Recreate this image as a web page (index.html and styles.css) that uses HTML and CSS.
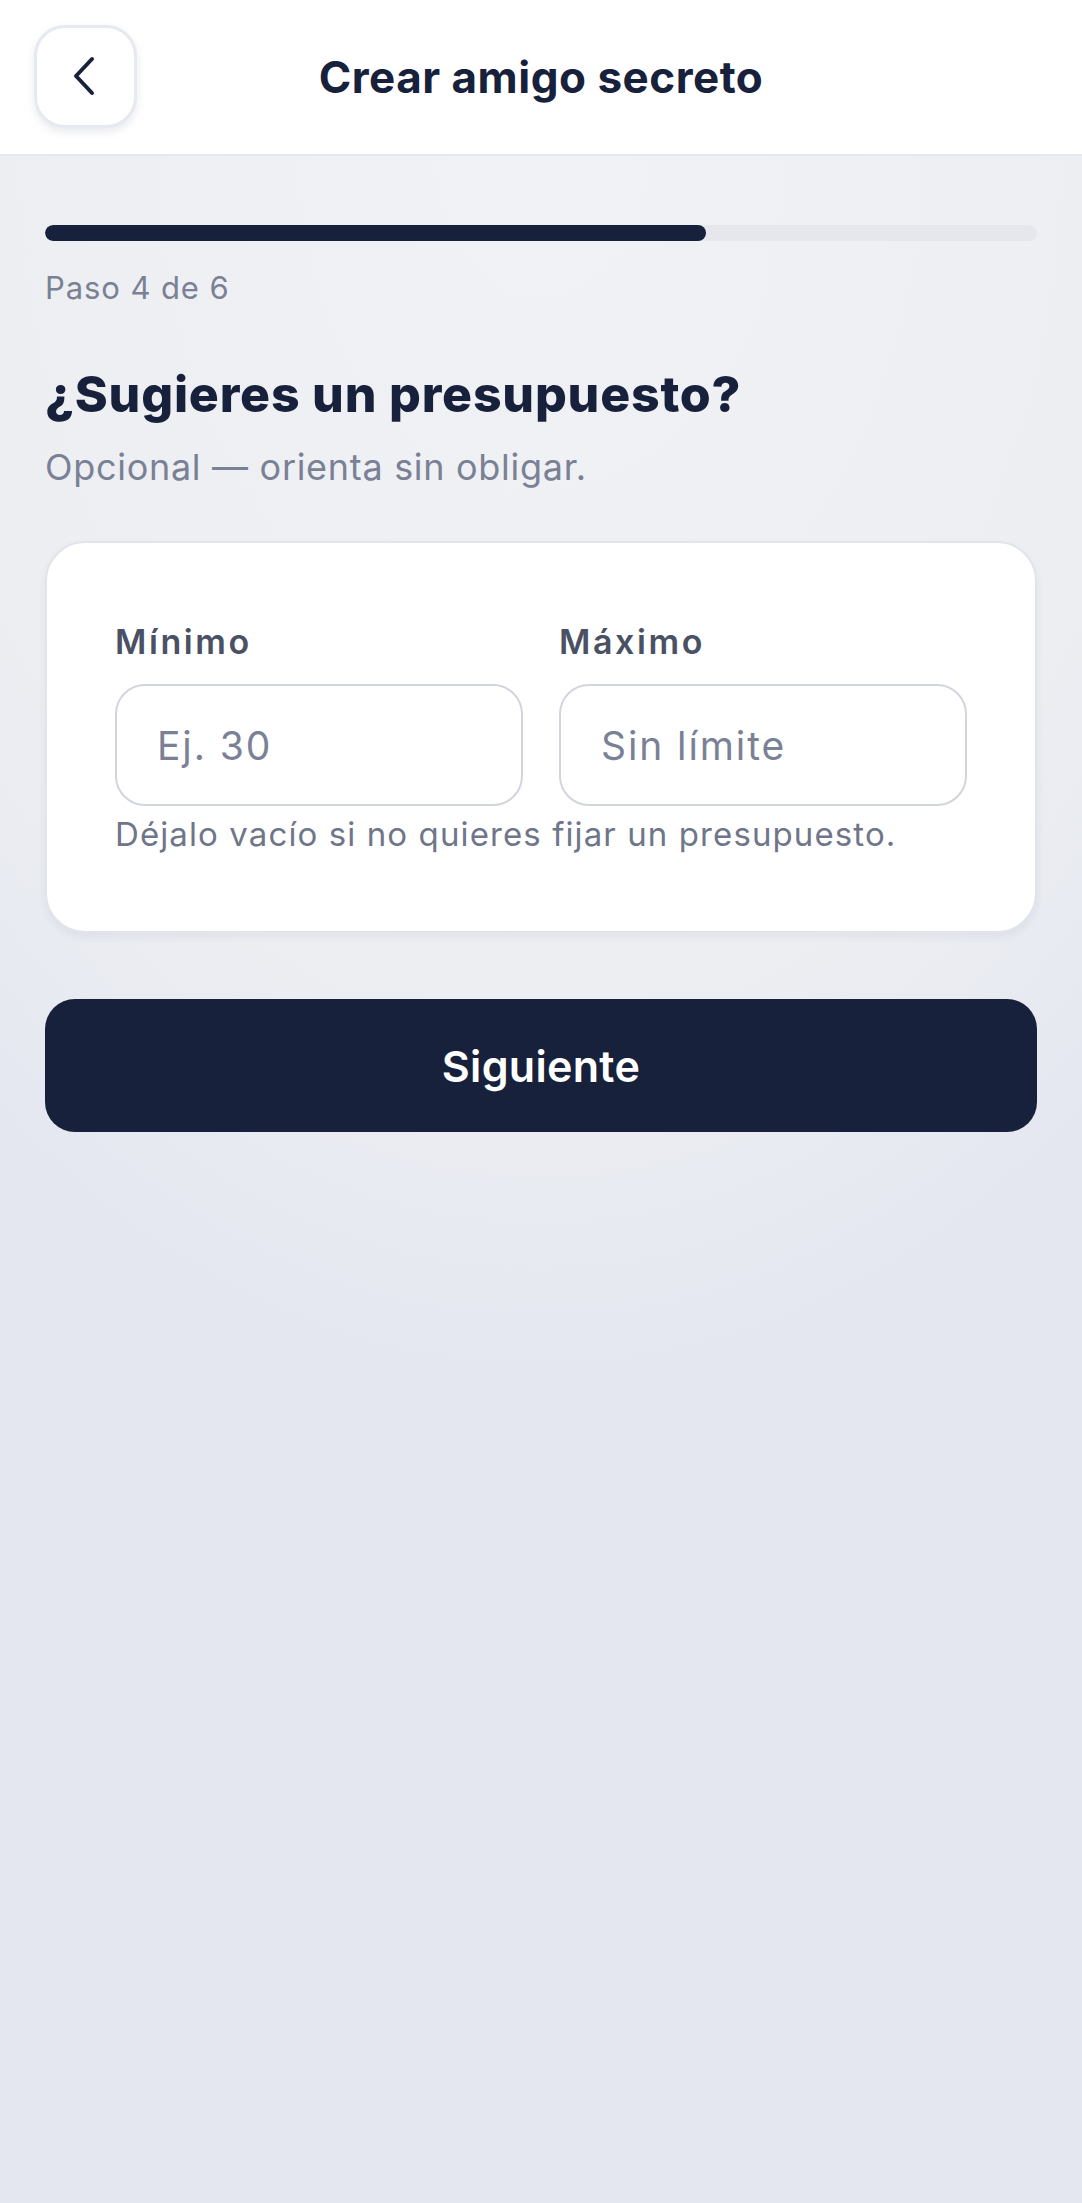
FILE: index.html
```html
<!DOCTYPE html>
<html lang="es">
<head>
  <meta charset="UTF-8" />
  <meta name="viewport" content="width=device-width, initial-scale=1.0"/>
  <title>Crear amigo secreto</title>
  <link rel="stylesheet" href="styles.css">
</head>
<body>

<header class="topbar">
  <button class="back-btn" aria-label="Volver">
    <svg width="24" height="40" viewBox="0 0 24 40" fill="none">
      <path d="M20 3 L4 20 L20 37" stroke="#18213b" stroke-width="4" stroke-linecap="round" stroke-linejoin="round"/>
    </svg>
  </button>
  <h1>Crear amigo secreto</h1>
  <div class="spacer"></div>
</header>

<main class="content">
  <div class="progress">
    <div class="progress-fill" style="width: 66.67%"></div>
  </div>
  <p class="step">Paso 4 de 6</p>

  <h2>¿Sugieres un presupuesto?</h2>
  <p class="subtitle">Opcional — orienta sin obligar.</p>

  <section class="card">
    <div class="fields">
      <label class="field">
        <span class="field-label">Mínimo</span>
        <input type="text" placeholder="Ej. 30" />
      </label>
      <label class="field">
        <span class="field-label">Máximo</span>
        <input type="text" placeholder="Sin límite" />
      </label>
    </div>
    <p class="hint">Déjalo vacío si no quieres fijar un presupuesto.</p>
  </section>

  <button class="next-btn">Siguiente</button>
</main>

</body>
</html>
```

FILE: styles.css
```css
:root {
  --navy: #18213b;
  --muted: #7a8195;
  --border: #d2d5de;
}

* { box-sizing: border-box; }

html, body {
  min-height: 100%;
}

body {
  margin: 0;
  min-height: 100vh;
  font-family: Inter, "Noto Sans", sans-serif;
  color: var(--navy);
  background:
    radial-gradient(ellipse 900px 1250px at 50% 150px, #f1f2f6 0%, #eceef2 70%, rgba(228, 231, 240, 0) 100%),
    #e4e7f0;
}

.topbar {
  height: 156px;
  background: #fff;
  border-bottom: 2px solid #e5e7ec;
  display: grid;
  grid-template-columns: 103px 1fr 103px;
  align-items: center;
  padding: 0 34px;
}

.back-btn {
  width: 103px;
  height: 103px;
  margin-top: -2px;
  border-radius: 31px;
  border: 3px solid #e6e9f0;
  background: #fff;
  box-shadow: 0 4px 8px rgba(40, 50, 80, 0.1);
  display: flex;
  align-items: center;
  justify-content: center;
  padding: 0 4px 0 0;
  cursor: pointer;
}

.topbar h1 {
  margin: 0;
  text-align: center;
  font-size: 44px;
  font-weight: 700;
  letter-spacing: 0.5px;
}

.content {
  padding: 69px 45px 0;
}

.progress {
  height: 16px;
  border-radius: 8px;
  background: #e6e7ec;
  overflow: hidden;
}

.progress-fill {
  height: 100%;
  background: var(--navy);
  border-radius: 8px;
}

.step {
  margin: 29px 0 0;
  font-size: 31px;
  line-height: 36px;
  letter-spacing: 0.9px;
  color: var(--muted);
}

h2 {
  margin: 59px 0 0;
  font-size: 50px;
  line-height: 58px;
  font-weight: 800;
  letter-spacing: 0.8px;
}

.subtitle {
  margin: 22px 0 0;
  font-size: 36px;
  line-height: 44px;
  letter-spacing: 0.7px;
  color: var(--muted);
}

.card {
  margin-top: 52px;
  background: #fff;
  border: 2px solid #e1e4eb;
  border-radius: 40px;
  box-shadow: 0 4px 8px rgba(40, 50, 80, 0.06);
  padding: 79px 68px 77px;
}

.fields {
  display: grid;
  grid-template-columns: 1fr 1fr;
  gap: 36px;
}

.field {
  display: flex;
  flex-direction: column;
  gap: 22px;
}

.field-label {
  font-size: 34px;
  line-height: 40px;
  font-weight: 600;
  letter-spacing: 2.6px;
  color: #4a5165;
}

.field input {
  width: 100%;
  height: 122px;
  border: 2px solid var(--border);
  border-radius: 30px;
  padding: 0 40px;
  font-family: inherit;
  font-size: 39px;
  letter-spacing: 1.9px;
  color: var(--navy);
  background: #fff;
  outline: none;
}

.field input::placeholder {
  color: var(--muted);
}

.hint {
  margin: 8px 0 0;
  font-size: 33px;
  line-height: 40px;
  letter-spacing: 1.1px;
  color: #6f7689;
}

.next-btn {
  display: block;
  width: 100%;
  height: 133px;
  margin-top: 66px;
  border: none;
  border-radius: 30px;
  background: var(--navy);
  color: #fff;
  font-family: inherit;
  font-size: 43px;
  font-weight: 600;
  letter-spacing: 0.3px;
  cursor: pointer;
}
```
